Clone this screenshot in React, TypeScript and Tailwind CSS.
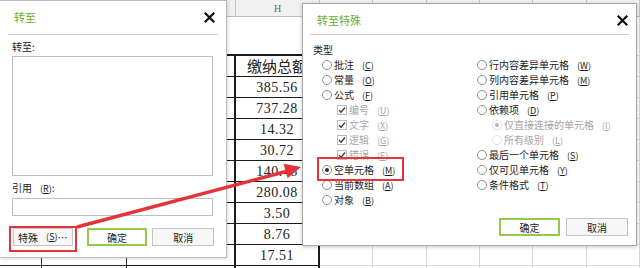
import React from "react";

type Col = { w: string; label: string; head: string; title: string; cell: string };

const cols: Col[] = [
  { w: "w-[42px]", label: "", head: "border-r border-[#c6c6c6]", title: "border-b-2 border-[#1a1a1a]", cell: "border-r border-b border-[#2b2b2b]" },
  { w: "w-[85px]", label: "", head: "border-r border-[#c6c6c6]", title: "border-b-2 border-[#1a1a1a]", cell: "border-r border-b border-[#2b2b2b]" },
  { w: "w-[109px]", label: "", head: "border-r border-[#c6c6c6]", title: "border-b-2 border-[#1a1a1a]", cell: "border-r-2 border-b border-[#1a1a1a]" },
  { w: "w-[84px]", label: "H", head: "border-r border-[#c6c6c6]", title: "border-b-2 border-[#1a1a1a]", cell: "border-r-2 border-b border-[#1a1a1a]" },
  { w: "w-[53px]", label: "", head: "border-r border-[#c6c6c6]", title: "border-r border-b border-[#d8d8d8]", cell: "border-r border-b border-[#d8d8d8]" },
  { w: "w-[54px]", label: "", head: "border-r border-[#c6c6c6]", title: "border-r border-b border-[#d8d8d8]", cell: "border-r border-b border-[#d8d8d8]" },
  { w: "w-[53px]", label: "", head: "border-r border-[#c6c6c6]", title: "border-r border-b border-[#d8d8d8]", cell: "border-r border-b border-[#d8d8d8]" },
  { w: "w-[53px]", label: "", head: "border-r border-[#c6c6c6]", title: "border-r border-b border-[#d8d8d8]", cell: "border-r border-b border-[#d8d8d8]" },
  { w: "w-[54px]", label: "", head: "border-r border-[#c6c6c6]", title: "border-r border-b border-[#d8d8d8]", cell: "border-r border-b border-[#d8d8d8]" },
  { w: "w-[53px]", label: "", head: "border-r border-[#c6c6c6]", title: "border-r border-b border-[#d8d8d8]", cell: "border-r border-b border-[#d8d8d8]" },
];

// column H values, first one is the header cell
const amounts = ["缴纳总额", "385.56", "737.28", "14.32", "30.72", "140.48", "280.08", "3.50", "8.76", "17.51", ""];

const CloseIcon = () => (
  <svg width="11" height="11" viewBox="0 0 11 11" className="shrink-0">
    <path d="M1.5 1.5L9.5 9.5M9.5 1.5L1.5 9.5" stroke="#111" strokeWidth="2.2" strokeLinecap="square" />
  </svg>
);

const Mn = ({ k }: { k: string }) => (
  <span className="ml-[8px] text-[9px]">
    (<span className="underline">{k}</span>)
  </span>
);

const Radio = ({ checked = false, disabled = false }: { checked?: boolean; disabled?: boolean }) => (
  <span
    className={`w-[10px] h-[10px] shrink-0 rounded-full border bg-white flex items-center justify-center ${
      disabled ? "border-[#e2e2e2]" : "border-[#8e8e8e]"
    }`}
  >
    {checked && (
      <span className={`w-[4px] h-[4px] rounded-full ${disabled ? "bg-[#b5b5b5]" : "bg-[#2a2a2a]"}`} />
    )}
  </span>
);

const Check = () => (
  <span className="w-[10px] h-[10px] shrink-0 border border-[#bcbcbc] bg-white flex items-center justify-center">
    <svg width="8" height="8" viewBox="0 0 8 8">
      <path d="M1 4.2L3 6.2L7 1.5" stroke="#3a3a3a" strokeWidth="1.3" fill="none" />
    </svg>
  </span>
);

type Opt = { kind: "radio" | "check" | "sub"; text: string; k: string; checked?: boolean; disabled?: boolean };

const leftOpts: Opt[] = [
  { kind: "radio", text: "批注", k: "C" },
  { kind: "radio", text: "常量", k: "O" },
  { kind: "radio", text: "公式", k: "F" },
  { kind: "check", text: "编号", k: "U", disabled: true },
  { kind: "check", text: "文字", k: "X", disabled: true },
  { kind: "check", text: "逻辑", k: "G", disabled: true },
  { kind: "check", text: "错误", k: "E", disabled: true },
  { kind: "radio", text: "空单元格", k: "M", checked: true },
  { kind: "radio", text: "当前数组", k: "A" },
  { kind: "radio", text: "对象", k: "B" },
];

const rightOpts: Opt[] = [
  { kind: "radio", text: "行内容差异单元格", k: "W" },
  { kind: "radio", text: "列内容差异单元格", k: "M" },
  { kind: "radio", text: "引用单元格", k: "P" },
  { kind: "radio", text: "依赖项", k: "D" },
  { kind: "sub", text: "仅直接连接的单元格", k: "I", checked: true, disabled: true },
  { kind: "sub", text: "所有级别", k: "L", disabled: true },
  { kind: "radio", text: "最后一个单元格", k: "S" },
  { kind: "radio", text: "仅可见单元格", k: "Y" },
  { kind: "radio", text: "条件格式", k: "T" },
];

const OptionRow = ({ o }: { o: Opt }) => (
  <div
    className={`h-[15px] flex items-center ${o.kind === "check" ? "pl-[15px]" : ""} ${
      o.kind === "sub" ? "pl-[15px]" : ""
    } ${o.disabled ? "text-[#a6a6a6]" : "text-[#1c1c1c]"}`}
  >
    {o.kind === "check" ? <Check /> : <Radio checked={o.checked} disabled={o.disabled} />}
    <span className="ml-[2px] text-[10px] leading-[15px] whitespace-nowrap">
      {o.text}
      <Mn k={o.k} />
    </span>
  </div>
);

const Btn = ({
  children,
  className = "",
  primary = false,
}: {
  children: React.ReactNode;
  className?: string;
  primary?: boolean;
}) => (
  <div
    className={`h-[18px] flex items-center justify-center text-[10px] text-[#1c1c1c] whitespace-nowrap ${
      primary ? "border-2 border-[#93c94d] bg-white" : "border border-[#c4c4c4] bg-[#f7f7f7]"
    } ${className}`}
  >
    {children}
  </div>
);

export default function App() {
  return (
    <div className="relative w-[640px] h-[268px] overflow-hidden bg-white font-['Noto_Sans_CJK_SC',sans-serif]">
      {/* spreadsheet behind the dialogs */}
      <div className="flex flex-col">
        <div className="flex h-[17px] bg-[#f1f1f1] border-b border-[#bdbdbd]">
          {cols.map((c, i) => (
            <div
              key={i}
              className={`${c.w} ${c.head} shrink-0 flex items-center justify-center text-[10px] text-[#666] font-['Liberation_Serif',serif]`}
            >
              {c.label}
            </div>
          ))}
        </div>
        <div className="flex h-[39px]">
          {cols.map((c, i) => (
            <div key={i} className={`${c.w} ${c.title} shrink-0`} />
          ))}
        </div>
        {amounts.map((a, r) => (
          <div key={r} className="flex h-[21px]">
            {cols.map((c, i) => (
              <div
                key={i}
                className={`${c.w} ${c.cell} shrink-0 flex items-center justify-center text-[#222] ${
                  r === 0 ? "text-[15px]" : "text-[14px] font-['Liberation_Serif',serif] tracking-[0.5px]"
                }`}
              >
                {i === 3 ? a : ""}
              </div>
            ))}
          </div>
        ))}
      </div>

      {/* 转至 dialog */}
      <div className="absolute left-0 top-0 w-[227px] h-[258px] bg-white border border-l-0 border-[#bcbcbc] shadow-[1px_1px_3px_rgba(0,0,0,0.15)] flex flex-col">
        <div className="h-[33px] flex items-center justify-between pl-[14px] pr-[11px]">
          <span className="text-[11px] text-[#6bae2f]">转至</span>
          <CloseIcon />
        </div>
        <div className="mx-[8px] h-px bg-[#cdcdcd]" />
        <div className="px-[12px] flex flex-col">
          <div className="mt-[5px] h-[14px] leading-[14px] text-[10px] text-[#1c1c1c]">转至:</div>
          <div className="mt-[2px] h-[120px] w-[201px] border border-[#bfbfbf] bg-white" />
          <div className="mt-[5px] h-[14px] leading-[14px] text-[10px] text-[#1c1c1c]">
            引用<Mn k="R" />:
          </div>
          <div className="mt-[3px] h-[18px] w-[201px] border border-[#bfbfbf] bg-white" />
          <div className="mt-[12px] flex">
            <Btn className="ml-[1px] w-[60px]">
              特殊<Mn k="S" />…
            </Btn>
            <Btn primary className="ml-[14px] w-[61px]">
              确定
            </Btn>
            <Btn className="ml-[5px] w-[62px]">取消</Btn>
          </div>
        </div>
      </div>

      {/* 转至特殊 dialog */}
      <div className="absolute left-[302px] top-[3px] w-[335px] h-[243px] bg-white border border-[#a9a9a9] shadow-[0_1px_4px_rgba(0,0,0,0.22)] flex flex-col">
        <div className="h-[30px] pt-[2px] flex items-center justify-between pl-[14px] pr-[8px]">
          <span className="text-[11px] text-[#6bae2f]">转至特殊</span>
          <CloseIcon />
        </div>
        <div className="mx-[7px] h-px bg-[#cdcdcd]" />
        <div className="pl-[10px] mt-[8px] h-[14px] leading-[14px] text-[10px] text-[#1c1c1c]">类型</div>
        <div className="flex">
          <div className="w-[174px] pl-[19px] flex flex-col">
            {leftOpts.map((o) => (
              <OptionRow key={o.text} o={o} />
            ))}
          </div>
          <div className="flex flex-col">
            {rightOpts.map((o) => (
              <OptionRow key={o.text} o={o} />
            ))}
          </div>
        </div>
        <div className="mt-[11px] pr-[8px] flex justify-end gap-[6px]">
          <Btn primary className="w-[61px] h-[17px]">
            确定
          </Btn>
          <Btn className="w-[62px] h-[17px]">取消</Btn>
        </div>
      </div>

      {/* red annotations */}
      <div className="absolute left-[9px] top-[226px] w-[68px] h-[26px] border-2 border-[#e5333a]" />
      <div className="absolute left-[317px] top-[157px] w-[87px] h-[24px] border-2 border-[#e5333a]" />
      <svg className="absolute left-0 top-0 pointer-events-none" width="640" height="268" viewBox="0 0 640 268">
        <line x1="77" y1="227" x2="286" y2="171.5" stroke="#e5333a" strokeWidth="3.5" />
        <polygon points="301,167 287.6,178.2 283.6,163.8" fill="#e5333a" />
      </svg>
    </div>
  );
}
